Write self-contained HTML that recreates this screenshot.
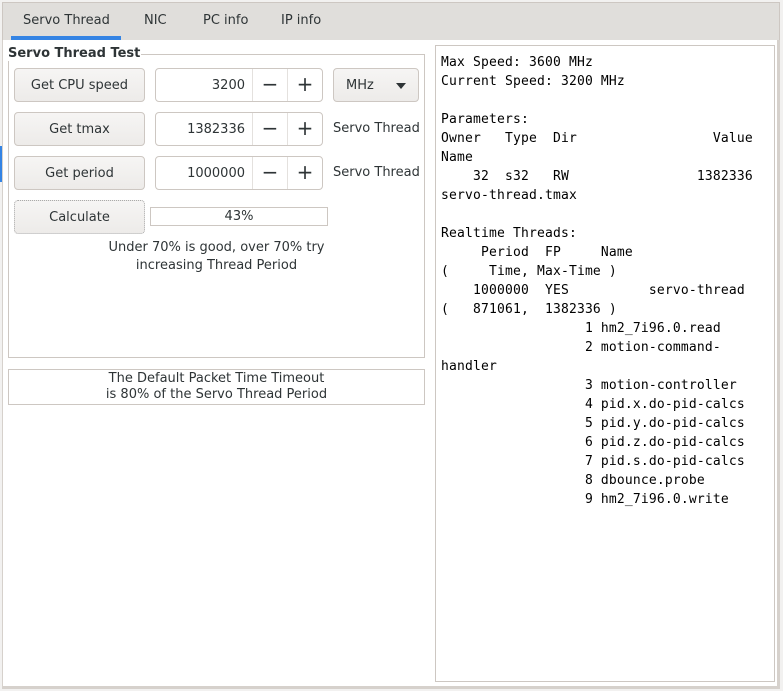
<!DOCTYPE html>
<html><head><style>
*{box-sizing:border-box;margin:0;padding:0}
body{width:783px;height:691px;background:#f2f1f0;position:relative;overflow:hidden;font-family:"DejaVu Sans","Liberation Sans",sans-serif;font-size:13px;color:#2e3436}
.a{position:absolute}
.tabbar{left:2px;top:2px;width:778px;height:38px;background:#e0dedb;border:1px solid #cdc7c2;border-bottom:none}
.tab{top:13px;color:#2e3436}
.content{left:2px;top:40px;width:778px;height:649px;background:#fff;border:1px solid #cdc7c2;border-width:0 3px 3px 1px;border-color:#d6d1cc}
.btn{background:linear-gradient(#f6f5f4,#edebe9);border:1px solid #cdc7c2;border-radius:4px;text-align:center;line-height:34px;height:34px;color:#2e3436}
.spin{border:1px solid #cdc7c2;border-radius:4px;height:34px;background:#fff}
.spin .v{position:absolute;right:77px;top:0;line-height:34px}
.spin .m,.spin .p{position:absolute;top:0;width:35px;height:32px;border-left:1px solid #e4e1de;text-align:center;line-height:31px;font-size:20px}
.spin .m{left:96px}.spin .p{left:131px}
pre{font-family:"DejaVu Sans Mono","Liberation Mono",monospace;font-size:13px;line-height:19px;letter-spacing:0.17px;color:#000}
</style></head><body>
<div class="a tabbar"></div>
<div class="a tab" style="left:23px">Servo Thread</div>
<div class="a tab" style="left:144px">NIC</div>
<div class="a tab" style="left:203px">PC info</div>
<div class="a tab" style="left:281px">IP info</div>
<div class="a" style="left:11px;top:36px;width:110px;height:4px;background:#3584e4"></div>
<div class="a content"></div>
<div class="a" style="left:0;top:146px;width:2px;height:36px;background:#3584e4"></div>

<div class="a" style="left:8px;top:54px;width:417px;height:304px;border:1px solid #cdc7c2"></div>
<div class="a" style="left:8px;top:46px;background:#fff;padding-right:1px;font-weight:bold;color:#2e3436">Servo Thread Test</div>

<div class="a btn" style="left:14px;top:68px;width:131px">Get CPU speed</div>
<div class="a spin" style="left:155px;top:68px;width:168px"><span class="v">3200</span><span class="m">−</span><span class="p">+</span></div>
<div class="a btn" style="left:333px;top:68px;width:86px;text-align:left;padding-left:12px">MHz<span style="position:absolute;right:12px;top:14px;border-left:5px solid transparent;border-right:5px solid transparent;border-top:6px solid #2e3436"></span></div>

<div class="a btn" style="left:14px;top:112px;width:131px">Get tmax</div>
<div class="a spin" style="left:155px;top:112px;width:168px"><span class="v">1382336</span><span class="m">−</span><span class="p">+</span></div>
<div class="a" style="left:333px;top:121px">Servo Thread</div>

<div class="a btn" style="left:14px;top:156px;width:131px">Get period</div>
<div class="a spin" style="left:155px;top:156px;width:168px"><span class="v">1000000</span><span class="m">−</span><span class="p">+</span></div>
<div class="a" style="left:333px;top:165px">Servo Thread</div>

<div class="a btn" style="left:14px;top:200px;width:131px;border-style:dotted;border-color:#aaa">Calculate</div>
<div class="a" style="left:150px;top:207px;width:178px;height:19px;border:1px solid #cdc7c2;text-align:center;line-height:17px">43%</div>
<div class="a" style="left:8px;top:239px;width:417px;text-align:center;line-height:18px">Under 70% is good, over 70% try<br>increasing Thread Period</div>

<div class="a" style="left:8px;top:369px;width:417px;height:36px;border:1px solid #cdc7c2;text-align:center;line-height:16px;padding-top:1px">The Default Packet Time Timeout<br>is 80% of the Servo Thread Period</div>

<div class="a" style="left:435px;top:45px;width:340px;height:637px;border:1px solid #cdc7c2"></div>
<pre class="a" style="left:441px;top:53px">Max Speed: 3600 MHz
Current Speed: 3200 MHz

Parameters:
Owner   Type  Dir                 Value
Name
    32  s32   RW                1382336
servo-thread.tmax

Realtime Threads:
     Period  FP     Name
(     Time, Max-Time )
    1000000  YES          servo-thread
(   871061,  1382336 )
                  1 hm2_7i96.0.read
                  2 motion-command-
handler
                  3 motion-controller
                  4 pid.x.do-pid-calcs
                  5 pid.y.do-pid-calcs
                  6 pid.z.do-pid-calcs
                  7 pid.s.do-pid-calcs
                  8 dbounce.probe
                  9 hm2_7i96.0.write</pre>
</body></html>
